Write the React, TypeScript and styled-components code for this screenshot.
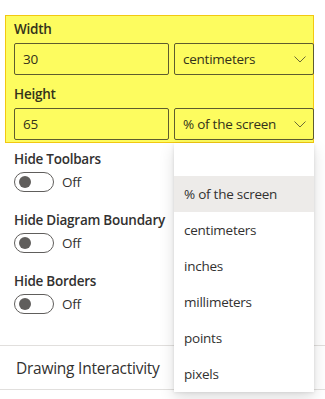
import React from 'react'
import styled, { createGlobalStyle } from 'styled-components'

const FONT = `'Open Sans', 'Noto Sans', sans-serif`

const UNITS = ['% of the screen', 'centimeters', 'inches', 'millimeters', 'points', 'pixels']
const TOGGLES = ['Hide Toolbars', 'Hide Diagram Boundary', 'Hide Borders']

const GlobalStyle = createGlobalStyle`
  body {
    margin: 0;
    background: #ffffff;
    font-family: ${FONT};
    color: #323130;
    letter-spacing: -0.25px;
  }
`

const Chevron = () => (
  <svg width="12" height="7" viewBox="0 0 12 7">
    <polyline points="0.5,0.5 6,6 11.5,0.5" fill="none" stroke="#6b6a35" strokeWidth="1" />
  </svg>
)

export default function App() {
  const selected = '% of the screen'
  return (
    <Page>
      <GlobalStyle />
      <Highlight>
        <FieldLabel>Width</FieldLabel>
        <InputRow>
          <TextBox>30</TextBox>
          <Select>
            <span>centimeters</span>
            <Chevron />
          </Select>
        </InputRow>
        <FieldLabel spaced>Height</FieldLabel>
        <InputRow>
          <TextBox>65</TextBox>
          <Select>
            <span>% of the screen</span>
            <Chevron />
          </Select>
        </InputRow>
      </Highlight>
      <Toggles>
        {TOGGLES.map(t => (
          <ToggleField key={t}>
            <ToggleLabel>{t}</ToggleLabel>
            <ToggleRow>
              <Switch>
                <Thumb />
              </Switch>
              <OffText>Off</OffText>
            </ToggleRow>
          </ToggleField>
        ))}
      </Toggles>
      <Section>Drawing Interactivity</Section>
      <Menu>
        <MenuItem empty />
        {UNITS.map(u => (
          <MenuItem key={u} active={u === selected}>{u}</MenuItem>
        ))}
      </Menu>
    </Page>
  )
}

const Page = styled.div`
  position: relative;
  width: 325px;
  height: 399px;
  overflow: hidden;
  padding-top: 15px;
  box-sizing: border-box;
`
const Highlight = styled.div`
  margin-left: 5px;
  width: 309px;
  box-sizing: border-box;
  background: #fdfc5f;
  border: 1px solid #f2c811;
  padding: 0 0 2px 8px;
`
const FieldLabel = styled.div<{ spaced?: boolean }>`
  font-size: 13.5px;
  font-weight: 600;
  line-height: 20px;
  padding: 3px 0 4px;
  margin-top: ${({ spaced }) => spaced ? '6px' : '0'};
  color: #33321a;
`
const InputRow = styled.div`
  display: grid;
  grid-template-columns: 155px 140px;
  gap: 5px;
`
const Box = styled.div`
  height: 32px;
  box-sizing: border-box;
  border: 1px solid #5e5c2e;
  border-radius: 2px;
  font-size: 13.5px;
  padding: 0 8px;
  display: flex;
  align-items: center;
  color: #33321a;
`
const TextBox = styled(Box)``
const Select = styled(Box)`
  justify-content: space-between;
  padding-right: 7px;
  svg {
    margin-top: 1px;
  }
`
const Toggles = styled.div`
  padding: 6px 0 0 14px;
  display: flex;
  flex-direction: column;
  gap: 18px;
`
const ToggleField = styled.div`
  display: flex;
  flex-direction: column;
`
const ToggleLabel = styled.div`
  font-size: 13.5px;
  font-weight: 600;
  line-height: 20px;
  margin-bottom: 3px;
`
const ToggleRow = styled.div`
  display: flex;
  align-items: center;
  height: 20px;
`
const Switch = styled.div`
  width: 40px;
  height: 20px;
  box-sizing: border-box;
  border: 1px solid #605e5c;
  border-radius: 10px;
  display: flex;
  align-items: center;
  padding-left: 4px;
`
const Thumb = styled.div`
  width: 12px;
  height: 12px;
  border-radius: 50%;
  background: #605e5c;
`
const OffText = styled.span`
  margin-left: 8px;
  font-size: 13.5px;
  line-height: 20px;
`
const Section = styled.div`
  margin-top: 31px;
  border-top: 1px solid #e1dfdd;
  border-bottom: 1px solid #e1dfdd;
  height: 43px;
  display: flex;
  align-items: center;
  padding-left: 16px;
  font-size: 15.5px;
  color: #323130;
`
const Menu = styled.div`
  position: absolute;
  left: 174px;
  top: 143px;
  width: 140px;
  background: #ffffff;
  box-shadow: 0 6.4px 14.4px 0 rgba(0, 0, 0, 0.132), 0 1.2px 3.6px 0 rgba(0, 0, 0, 0.108);
  display: flex;
  flex-direction: column;
`
const MenuItem = styled.div<{ active?: boolean, empty?: boolean }>`
  height: ${({ empty }) => empty ? '33px' : '36px'};
  display: flex;
  align-items: center;
  padding-left: 10px;
  font-size: 13.5px;
  color: #323130;
  background: ${({ active }) => active ? '#edebe9' : 'transparent'};
`
